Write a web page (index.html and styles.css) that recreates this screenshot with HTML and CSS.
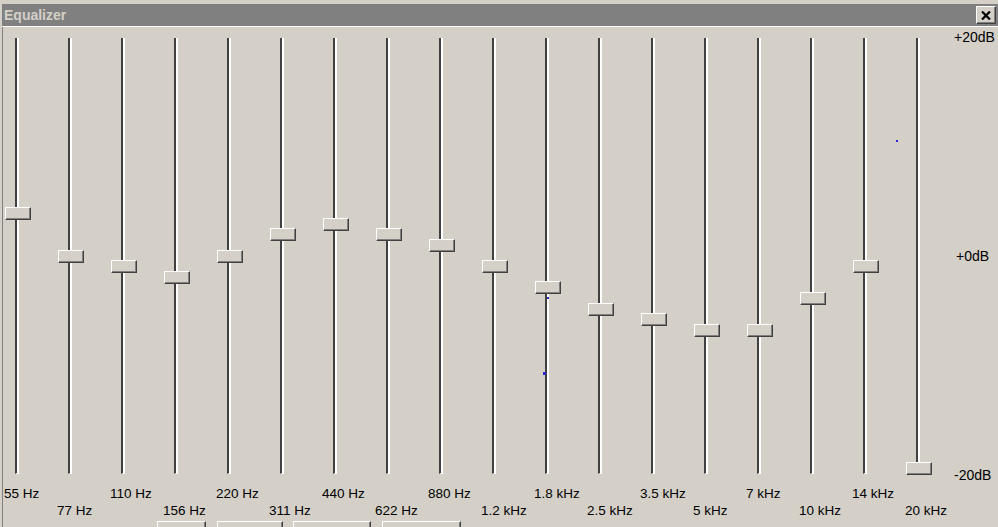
FILE: index.html
```html
<!DOCTYPE html>
<html lang="en">
<head>
    <meta charset="UTF-8">
    <title>Equalizer</title>
    <link rel="stylesheet" href="styles.css">
</head>
<body>
    <div class="window">
        <div class="titlebar">
            <span class="title">Equalizer</span>
            <button type="button" class="close">
                <svg width="10" height="9" viewBox="0 0 10 9">
                    <path d="M1 0.5 L9 8.5 M9 0.5 L1 8.5" stroke="#000" stroke-width="2.2" fill="none"/>
                </svg>
            </button>
        </div>

        <div class="panel">
            <div class="sliders">
                <div class="slider-col"><div class="slider" data-db="4"><div class="track"></div><div class="thumb"></div></div><span class="band">55 Hz</span></div>
                <div class="slider-col"><div class="slider" data-db="0"><div class="track"></div><div class="thumb"></div></div><span class="band">77 Hz</span></div>
                <div class="slider-col"><div class="slider" data-db="-1"><div class="track"></div><div class="thumb"></div></div><span class="band">110 Hz</span></div>
                <div class="slider-col"><div class="slider" data-db="-2"><div class="track"></div><div class="thumb"></div></div><span class="band">156 Hz</span></div>
                <div class="slider-col"><div class="slider" data-db="0"><div class="track"></div><div class="thumb"></div></div><span class="band">220 Hz</span></div>
                <div class="slider-col"><div class="slider" data-db="2"><div class="track"></div><div class="thumb"></div></div><span class="band">311 Hz</span></div>
                <div class="slider-col"><div class="slider" data-db="3"><div class="track"></div><div class="thumb"></div></div><span class="band">440 Hz</span></div>
                <div class="slider-col"><div class="slider" data-db="2"><div class="track"></div><div class="thumb"></div></div><span class="band">622 Hz</span></div>
                <div class="slider-col"><div class="slider" data-db="1"><div class="track"></div><div class="thumb"></div></div><span class="band">880 Hz</span></div>
                <div class="slider-col"><div class="slider" data-db="-1"><div class="track"></div><div class="thumb"></div></div><span class="band">1.2 kHz</span></div>
                <div class="slider-col"><div class="slider" data-db="-3"><div class="track"></div><div class="thumb"></div></div><span class="band">1.8 kHz</span></div>
                <div class="slider-col"><div class="slider" data-db="-5"><div class="track"></div><div class="thumb"></div></div><span class="band">2.5 kHz</span></div>
                <div class="slider-col"><div class="slider" data-db="-6"><div class="track"></div><div class="thumb"></div></div><span class="band">3.5 kHz</span></div>
                <div class="slider-col"><div class="slider" data-db="-7"><div class="track"></div><div class="thumb"></div></div><span class="band">5 kHz</span></div>
                <div class="slider-col"><div class="slider" data-db="-7"><div class="track"></div><div class="thumb"></div></div><span class="band">7 kHz</span></div>
                <div class="slider-col"><div class="slider" data-db="-4"><div class="track"></div><div class="thumb"></div></div><span class="band">10 kHz</span></div>
                <div class="slider-col"><div class="slider" data-db="-1"><div class="track"></div><div class="thumb"></div></div><span class="band">14 kHz</span></div>
                <div class="slider-col"><div class="slider" data-db="-20"><div class="track"></div><div class="thumb"></div></div><span class="band">20 kHz</span></div>

                <div class="scale">
                    <span>+20dB</span>
                    <span>+0dB</span>
                    <span>-20dB</span>
                </div>
            </div>

            <div class="buttons">
                <button type="button" class="btn w1"></button>
                <button type="button" class="btn w2"></button>
                <button type="button" class="btn w3"></button>
                <button type="button" class="btn w4"></button>
            </div>
        </div>

        <span class="speck" style="left: 547px; top: 293px;"></span>
        <span class="speck big" style="left: 543px; top: 368px;"></span>
        <span class="speck" style="left: 896px; top: 136px;"></span>
    </div>

    <script>
        // place each thumb from its gain in dB (-20 .. +20)
        document.querySelectorAll('.slider').forEach(function(slider) {
            var db = parseFloat(slider.dataset.db);
            var top = 211.5 - db * 10.6;
            slider.querySelector('.thumb').style.top = top + 'px';
        });
    </script>
</body>
</html>
```

FILE: styles.css
```css
html, body {
    margin: 0;
    padding: 0;
    height: 100%;
    overflow: hidden;
}

body {
    background-color: #d4d0c8;
    font-family: "Liberation Sans", Arial, sans-serif;
    font-size: 13.5px;
    color: #000;
}

.window {
    position: relative;
    height: 100%;
}

.titlebar {
    margin: 4px 0 0 2px;
    height: 22px;
    background-color: #808080;
    border-bottom: 1px solid #fff;
    display: flex;
    align-items: center;
    justify-content: space-between;
    padding: 0 2px 0 2px;
}

.title {
    color: #d4d0c8;
    font-weight: bold;
    font-size: 14px;
}

.close {
    box-sizing: border-box;
    width: 20px;
    height: 18px;
    padding: 0;
    display: flex;
    align-items: center;
    justify-content: center;
    background-color: #d4d0c8;
    border: 1px solid;
    border-color: #fff #404040 #404040 #fff;
    box-shadow: inset -1px -1px 0 #808080;
}

.panel {
    margin-left: 2px;
    border-left: 1px solid #808080;
    padding-left: 1px;
    height: 100%;
}

.sliders {
    display: flex;
    align-items: flex-start;
    padding-top: 11px;
}

.slider-col {
    flex: none;
    width: 53px;
}

.slider {
    position: relative;
    height: 436px;
}

.track {
    margin-left: 11px;
    width: 0;
    height: 435px;
    border-left: 2px solid #404040;
    border-right: 2px solid #fff;
    border-bottom: 1px solid #fff;
}

.thumb {
    position: absolute;
    left: 1px;
    width: 26px;
    height: 13px;
    box-sizing: border-box;
    background-color: #d4d0c8;
    border: 1px solid;
    border-color: #fff #404040 #404040 #fff;
    box-shadow: inset -1px -1px 0 #808080;
}

.band {
    display: block;
    margin-top: 11px;
    line-height: 17px;
    white-space: nowrap;
}

.slider-col:nth-child(even) .band {
    margin-top: 28px;
}

.scale {
    margin: -9px 0 0 -4px;
    height: 455px;
    display: flex;
    flex-direction: column;
    justify-content: space-between;
    font-size: 14px;
    line-height: 17px;
}

.scale span:nth-child(2) {
    padding-left: 2px;
}

.buttons {
    display: flex;
    gap: 10px;
    margin-top: 2px;
    padding-left: 153px;
}

.btn {
    flex: none;
    height: 23px;
    padding: 0;
    background-color: #d4d0c8;
    border: 1px solid;
    border-color: #fff #404040 #404040 #fff;
    box-shadow: inset -1px -1px 0 #808080;
}

.w1 { width: 49px; }
.w2 { width: 66px; margin-left: 1px; }
.w3 { width: 78px; }
.w4 { width: 79px; margin-left: 1px; }

/* stray blue pixels on the panel */
.speck {
    position: absolute;
    width: 2px;
    height: 2px;
    background-color: #2a2ad0;
}

.speck.big {
    width: 3px;
    height: 3px;
}
```
